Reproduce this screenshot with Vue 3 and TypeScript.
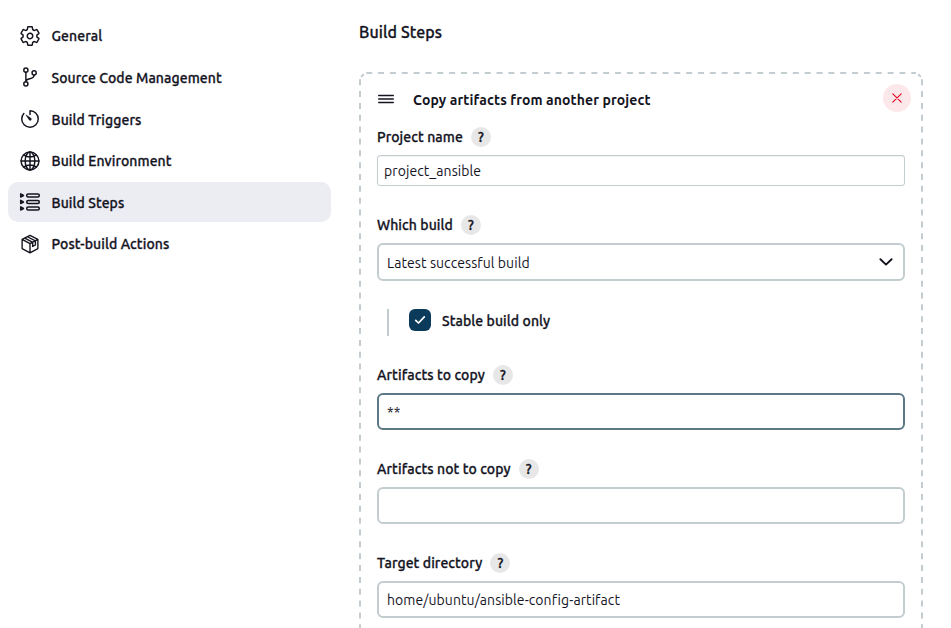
<script setup lang="ts">
interface NavItem {
  id: string
  label: string
  active?: boolean
}

const navItems: NavItem[] = [
  { id: 'general', label: 'General' },
  { id: 'scm', label: 'Source Code Management' },
  { id: 'triggers', label: 'Build Triggers' },
  { id: 'environment', label: 'Build Environment' },
  { id: 'steps', label: 'Build Steps', active: true },
  { id: 'post', label: 'Post-build Actions' },
]

const stepRows: number[] = [5.5, 12, 18.5]
</script>

<template>
  <div class="page">
    <nav class="sidebar">
      <a v-for="item in navItems" :key="item.id" class="nav-item" :class="[item.id, { active: item.active }]">
        <svg v-if="item.id === 'general'" class="icon" viewBox="0 0 512 512">
          <path d="M262.29 192.31a64 64 0 1057.4 57.4 64.13 64.13 0 00-57.4-57.4zM416.39 256a154.34 154.34 0 01-1.53 20.79l45.21 35.46a10.81 10.81 0 012.45 13.75l-42.77 74a10.81 10.81 0 01-13.14 4.59l-44.9-18.08a16.11 16.11 0 00-15.17 1.75A164.48 164.48 0 01325 400.8a15.94 15.94 0 00-8.82 12.14l-6.73 47.89a11.08 11.08 0 01-10.68 9.17h-85.54a11.11 11.11 0 01-10.69-8.87l-6.72-47.82a16.07 16.07 0 00-9-12.22 155.3 155.3 0 01-21.46-12.57 16 16 0 00-15.11-1.71l-44.89 18.07a10.81 10.81 0 01-13.14-4.58l-42.77-74a10.8 10.8 0 012.45-13.75l38.21-30a16.05 16.05 0 006-14.08c-.36-4.17-.58-8.33-.58-12.5s.21-8.27.58-12.35a16 16 0 00-6.07-13.94l-38.19-30A10.81 10.81 0 0149.48 186l42.77-74a10.81 10.81 0 0113.14-4.59l44.9 18.08a16.11 16.11 0 0015.17-1.75A164.48 164.48 0 01187 111.2a15.94 15.94 0 008.82-12.14l6.73-47.89A11.08 11.08 0 01213.23 42h85.54a11.11 11.11 0 0110.69 8.87l6.72 47.82a16.07 16.07 0 009 12.22 155.3 155.3 0 0121.46 12.57 16 16 0 0015.11 1.71l44.89-18.07a10.81 10.81 0 0113.14 4.58l42.77 74a10.8 10.8 0 01-2.45 13.75l-38.21 30a16.05 16.05 0 00-6.05 14.08c.33 4.14.55 8.3.55 12.47z" />
        </svg>
        <svg v-else-if="item.id === 'scm'" class="icon" viewBox="0 0 512 512">
          <circle cx="160" cy="96" r="48" />
          <circle cx="160" cy="416" r="48" />
          <circle cx="352" cy="160" r="48" />
          <path d="M160 368V144M352 208c0 128-192 48-192 160" />
        </svg>
        <svg v-else-if="item.id === 'triggers'" class="icon" viewBox="0 0 512 512">
          <path d="M112.91 128A191.85 191.85 0 0064 254c-1.18 106.35 85.65 193.8 192 194 106.2.2 192-85.83 192-192 0-104.54-83.55-189.61-187.5-192a4.36 4.36 0 00-4.5 4.37V152" />
          <path class="solid" d="M233.38 278.63l-79-113a8.13 8.13 0 0111.32-11.32l113 79a32.5 32.5 0 01-37.25 53.26 33.21 33.21 0 01-8.07-7.94z" />
        </svg>
        <svg v-else-if="item.id === 'environment'" class="icon" viewBox="0 0 512 512">
          <circle cx="256" cy="256" r="208" />
          <path d="M256 48c-58.07 0-112.67 93.13-112.67 208S197.93 464 256 464s112.67-93.13 112.67-208S314.07 48 256 48z" />
          <path d="M117.33 117.33c38.24 27.15 86.38 43.34 138.67 43.34s100.43-16.19 138.67-43.34M394.67 394.67c-38.24-27.15-86.38-43.34-138.67-43.34s-100.43 16.19-138.67 43.34M256 48v416M464 256H48" />
        </svg>
        <svg v-else-if="item.id === 'steps'" class="icon small-grid" viewBox="0 0 24 24">
          <g v-for="y in stepRows" :key="y">
            <path :d="`M2.7 ${y - 1.6}v3.2l2.8 -1.6z`" />
            <rect x="8.7" :y="y - 1.5" width="12.6" height="3" rx="1.5" />
          </g>
        </svg>
        <svg v-else class="icon small-grid" viewBox="0 0 24 24">
          <path d="M12 2.6L20.6 7v10L12 21.6 3.4 17V7zM3.4 7L12 11.6 20.6 7M12 11.6v10M6.3 5.6l8.8 4.6M9.2 4.1l8.6 4.6M14.9 10.2v4.5l3-1.6V8.6" />
        </svg>
        <span>{{ item.label }}</span>
      </a>
    </nav>

    <main class="content">
      <h1 class="section-title">Build Steps</h1>
      <section class="step-card">
        <svg class="outline" width="564" height="640" viewBox="0 0 564 640">
          <path d="M7.2 1H557" />
          <path d="M1 7.2V640M563 7.2V640" />
          <path class="corner" d="M2.2 4.8L4.8 2.2M559.2 2.2L561.8 4.8" />
        </svg>
        <header class="step-header">
          <svg class="handle" viewBox="0 0 16 10">
            <path d="M.7 1.5H15.3M.7 5H15.3M.7 8.5H15.3" />
          </svg>
          <h2 class="step-name">Copy artifacts from another project</h2>
          <button class="remove">
            <svg viewBox="0 0 10 10"><path d="M.8.8L9.2 9.2M9.2.8L.8 9.2" /></svg>
          </button>
        </header>

        <div class="field project">
          <div class="label"><span>Project name</span><i class="help">?</i></div>
          <div class="input compact">project_ansible</div>
        </div>

        <div class="field which">
          <div class="label"><span>Which build</span><i class="help">?</i></div>
          <div class="input select">
            <span>Latest successful build</span>
            <svg viewBox="0 0 14 8"><path d="M1.4 1.2L7 6.6 12.6 1.2" /></svg>
          </div>
        </div>

        <div class="nested">
          <span class="checkbox">
            <svg viewBox="0 0 12 10"><path d="M1.7 5.3L4.5 8 10.3 1.8" /></svg>
          </span>
          <span class="check-label">Stable build only</span>
        </div>

        <div class="field copy">
          <div class="label"><span>Artifacts to copy</span><i class="help">?</i></div>
          <div class="input focused">**</div>
        </div>
        <div class="field exclude">
          <div class="label"><span>Artifacts not to copy</span><i class="help">?</i></div>
          <div class="input"></div>
        </div>
        <div class="field target">
          <div class="label"><span>Target directory</span><i class="help">?</i></div>
          <div class="input">home/ubuntu/ansible-config-artifact</div>
        </div>
      </section>
    </main>
  </div>
</template>

<style>
body {
  overflow: hidden;
  background: #fff;
}
</style>

<style scoped>
.page {
  display: flex;
  box-sizing: border-box;
  width: 951px;
  height: 628px;
  overflow: hidden;
  color: #14141f;
  font-family: Ubuntu, "Noto Sans", sans-serif;
  font-size: 14px;
  line-height: 20px;
}
.page * {
  box-sizing: border-box;
}
svg {
  display: block;
  fill: none;
  stroke: currentColor;
  stroke-linecap: round;
  stroke-linejoin: round;
}
.sidebar {
  display: flex;
  flex: none;
  flex-direction: column;
  gap: 1.6px;
  width: 331px;
  padding: 15.9px 0 0 8px;
}
.nav-item {
  display: flex;
  flex: none;
  align-items: center;
  gap: 10.5px;
  height: 40px;
  padding-left: 11px;
  border-radius: 10px;
  white-space: nowrap;
}
.nav-item.steps {
  gap: 9.5px;
  padding-left: 10px;
}
.nav-item span {
  padding-top: 0.9px;
}
.nav-item,
.section-title,
.label,
.check-label {
  font-weight: 500;
  letter-spacing: 0.09px;
  -webkit-text-stroke: 0.3px currentColor;
}
.nav-item.active {
  background: #ecedf3;
}
.icon {
  width: 22px;
  height: 22px;
  stroke-width: 34;
}
.icon.small-grid {
  stroke-width: 1.5;
}
.steps .icon {
  width: 24px;
  height: 24px;
}
.icon .solid {
  fill: currentColor;
  stroke: none;
}
.content {
  flex: none;
  width: 564px;
  margin-left: 28px;
  padding-top: 20px;
}
.section-title {
  margin: 0;
  font-size: 16px;
  line-height: 24px;
}
.step-card {
  position: relative;
  margin-top: 28px;
  padding: 12px 18px 0;
}
.outline {
  position: absolute;
  top: 0;
  left: 0;
  stroke: #c3ccd1;
  stroke-width: 2;
  stroke-dasharray: 6 5.85;
  stroke-linecap: butt;
}
.outline .corner {
  stroke-dasharray: none;
}
.step-header {
  display: flex;
  align-items: center;
  height: 28px;
  margin-right: -6px;
}
.handle {
  width: 16px;
  height: 10px;
  margin: 2px 19px 0 1px;
  stroke-width: 1.4;
}
.step-name {
  margin: 3px 0 0;
  font-size: 14px;
  font-weight: 700;
  letter-spacing: 0.11px;
}
.remove {
  display: flex;
  align-items: center;
  justify-content: center;
  width: 28px;
  height: 28px;
  margin-left: auto;
  padding: 0;
  border: 0;
  border-radius: 50%;
  background: #fce8ea;
  color: #e6001f;
}
.remove svg {
  width: 10px;
  height: 10px;
  stroke-width: 1.1;
}
.label {
  display: flex;
  align-items: center;
  gap: 8px;
  height: 20px;
  margin-bottom: 8px;
}
.help {
  width: 20px;
  height: 20px;
  border-radius: 50%;
  background: #e7e7e8;
  font-size: 14px;
  font-style: normal;
  text-align: center;
}
.input {
  display: flex;
  align-items: center;
  width: 528px;
  height: 37px;
  padding: 0 8px;
  border: 2px solid #c3cccf;
  border-radius: 6px;
  background: #fff;
  letter-spacing: 0.08px;
}
.input.compact {
  height: 31px;
  padding: 0 6px;
  border-width: 1px;
  border-radius: 3px;
  box-shadow: inset 0 1px 1px #0000000f;
}
.input.select {
  justify-content: space-between;
  height: 38px;
  padding-right: 10px;
}
.select span {
  padding-top: 1px;
}
.select svg {
  width: 14px;
  height: 8px;
  stroke-width: 1.9;
}
.input.focused {
  border-color: #5c7885;
}
.project {
  margin-top: 15px;
}
.which {
  margin-top: 29px;
}
.nested {
  display: flex;
  height: 27px;
  margin: 28px 0 0 10px;
  padding-left: 20px;
  border-left: 2px solid #c3ccd1;
}
.checkbox {
  display: flex;
  align-items: center;
  justify-content: center;
  width: 22px;
  height: 22px;
  border-radius: 6px;
  background: #0b3a5b;
  color: #fff;
}
.checkbox svg {
  width: 12px;
  height: 10px;
  stroke-width: 1.7;
}
.check-label {
  margin: 2px 0 0 11px;
}
.copy,
.exclude,
.target {
  margin-top: 29px;
}
</style>
